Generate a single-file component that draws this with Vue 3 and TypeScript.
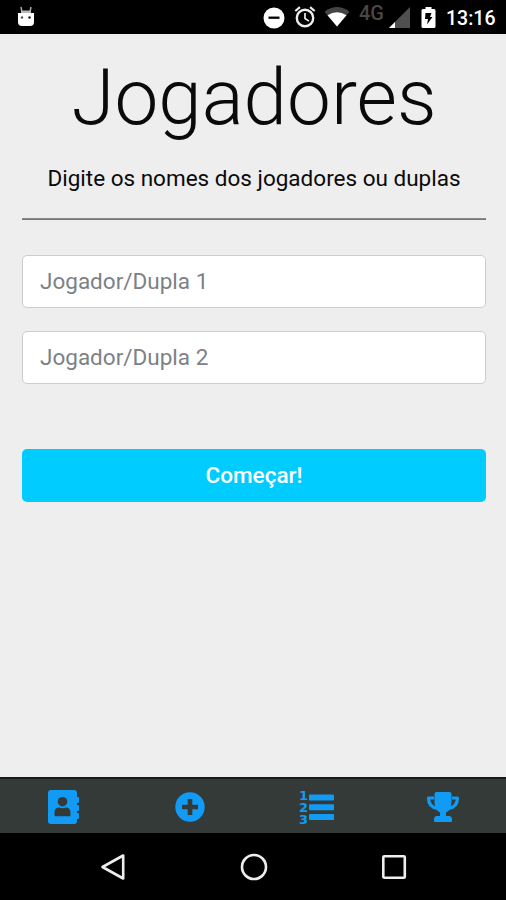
<script setup lang="ts">
import { ref } from 'vue'

interface Player {
  id: number
  name: string
}

const players = ref<Player[]>([
  { id: 1, name: '' },
  { id: 2, name: '' },
])
</script>

<template>
  <div class="screen">
    <header class="status-bar">
      <svg class="robot" width="18" height="22" viewBox="0 0 18 22">
        <path d="M4 1l1 5M14 1l-1 5" stroke="#aaa" stroke-width="1.5" />
        <path d="M4 4.5h10v3H4z" fill="#bbb" />
        <path d="M1 7h16v9q0 4-4 4H5q-4 0-4-4z" fill="#fff" />
        <circle cx="5" cy="11.5" r="1.2" fill="#555" />
        <circle cx="12.5" cy="11.5" r="1.3" fill="#222" />
      </svg>
      <div class="status-icons">
        <svg class="dnd" width="22" height="22" viewBox="0 0 22 22">
          <circle cx="11" cy="11" r="10.5" fill="#fff" />
          <path d="M5.5 10.7h11" stroke="#000" stroke-width="2.3" />
        </svg>
        <svg class="alarm" width="22" height="22" viewBox="0 0 22 22" fill="none" stroke="#eee">
          <circle cx="11" cy="12" r="8.2" stroke-width="2.4" />
          <path d="M1.3 5l4.6-3.8M20.7 5l-4.6-3.8" stroke-width="2.2" />
          <path d="M11 7v5.5l4 2.6" stroke-width="1.7" />
        </svg>
        <svg class="wifi" width="26" height="20" viewBox="0 0 26 20">
          <path d="M.5 4.7Q13-4.500 25.500 4.700L13 19.500z" fill="#444" />
          <path d="M3.500 8.300Q13 2 22.500 8.300L13 19.500z" fill="#fff" />
        </svg>
        <span class="network">4G</span>
        <svg class="signal" width="21" height="21" viewBox="0 0 21 21">
          <path d="M21 0v21H0z" fill="#505050" />
          <path d="M6 15v6H0z" fill="#fff" />
        </svg>
        <svg class="battery" width="15" height="21" viewBox="0 0 15 21">
          <path d="M4.500 0h6v2H13q1.500 0 1.500 1.500v16q0 1.500-1.500 1.500H2Q.5 21 .5 19.500v-16Q.5 2 2 2h2.500z" fill="#fff" />
          <path d="M4.500 6h6L9 10h2.500L6 17.500 7 12H4z" fill="#000" />
        </svg>
        <time class="clock">13:16</time>
      </div>
    </header>

    <main class="content">
      <h1>Jogadores</h1>
      <p>Digite os nomes dos jogadores ou duplas</p>
      <hr />
      <form @submit.prevent>
        <input
          v-for="player in players"
          :key="player.id"
          v-model="player.name"
          type="text"
          :placeholder="`Jogador/Dupla ${player.id}`"
        />
        <button type="submit">Começar!</button>
      </form>
    </main>

    <nav class="tabs">
      <a class="tab">
        <svg width="34" height="36" viewBox="0 0 34 36">
          <path d="M5 1h23q3 0 3 3v4h1q1 0 1 1v4q0 1-1 1h-1v2h1q1 0 1 1v4q0 1-1 1h-1v2h1q1 0 1 1v4q0 1-1 1h-1v2q0 3-3 3H5q-3 0-3-3V4q0-3 3-3z" fill="#129bf4" />
          <circle cx="16.500" cy="12.700" r="4.800" fill="#343a38" />
          <path d="M8.500 26.500v-3q0-5 5-5 3 1.500 6 0 5 0 5 5v3q0 .700-1 .700H9.500q-1 0-1-.700z" fill="#343a38" />
        </svg>
      </a>
      <a class="tab">
        <svg width="32" height="32" viewBox="0 0 32 32">
          <circle cx="16" cy="16" r="14.700" fill="#129bf4" />
          <path d="M16 8v16M8 16h16" stroke="#343a38" stroke-width="4.600" stroke-linejoin="round" />
        </svg>
      </a>
      <a class="tab">
        <svg width="36" height="42" viewBox="0 -3 36 42" fill="#129bf4">
          <text class="numeral" x="1" y="10.700">1</text>
          <text class="numeral" x="1" y="22.900">2</text>
          <text class="numeral" x="1" y="35">3</text>
          <rect x="11" y="5.500" width="25" height="6" rx="1" />
          <rect x="11" y="15.300" width="25" height="6" rx="1" />
          <rect x="11" y="25" width="25" height="6" rx="1" />
        </svg>
      </a>
      <a class="tab">
        <svg width="34" height="32" viewBox="0 0 34 32">
          <path d="M8 7H2.500q0 9 9 10.500M26 7h5.500q0 9-9 10.500" fill="none" stroke="#129bf4" stroke-width="3.200" stroke-linejoin="round" />
          <path d="M8.500 3Q8.500 1 10.500 1h13q2 0 2 2v8q0 8-5.500 10.500v3.500h3q3 0 3 4v1q0 1-1 1H9q-1 0-1-1v-1q0-4 3-4h3v-3.500Q8.500 19 8.500 11z" fill="#129bf4" />
        </svg>
      </a>
    </nav>

    <footer class="system-nav">
      <svg width="28" height="30" viewBox="0 0 28 30" fill="none" stroke="#eee" stroke-width="2.600">
        <path d="M24.200 3.500v23L3.500 15z" stroke-linejoin="round" />
      </svg>
      <svg width="28" height="30" viewBox="0 0 28 30" fill="none" stroke="#eee" stroke-width="2.600">
        <circle cx="14" cy="15" r="12" />
      </svg>
      <svg width="28" height="30" viewBox="0 0 28 30" fill="none" stroke="#eee" stroke-width="2.600">
        <rect x="3.300" y="4.200" width="21.500" height="21.500" rx="1" />
      </svg>
    </footer>
  </div>
</template>

<style>
body {
  margin: 0;
  background: #eee;
}
</style>

<style scoped>
.screen {
  display: flex;
  flex-direction: column;
  height: 900px;
  overflow: hidden;
  background: #eee;
  color: #0a0a0a;
  font-family: Roboto, sans-serif;
}

.screen * {
  box-sizing: border-box;
}

svg {
  display: block;
  flex: none;
}

.status-bar {
  display: flex;
  justify-content: space-between;
  height: 34px;
  padding: 0 11px 0 17px;
  background: #000;
}

.robot {
  margin-top: 6px;
}

.status-icons {
  display: flex;
  align-items: flex-start;
}

.dnd {
  margin-top: 7px;
}

.alarm {
  margin: 6px 0 0 9px;
}

.wifi {
  margin: 7px 0 0 8px;
}

.network {
  width: 26px;
  margin: 3px 0 0 9px;
  color: #484848;
  font-size: 20px;
  line-height: 20px;
  font-weight: 500;
}

.signal {
  margin: 7px 0 0 4px;
}

.battery {
  margin: 7px 0 0 11px;
}

.clock {
  width: 49px;
  margin: 7px 0 0 10px;
  color: #fff;
  font-size: 19.5px;
  line-height: 24px;
  font-weight: 500;
}

.content {
  flex: 1;
  padding: 16px 20px 0 22px;
}

h1 {
  margin: 0;
  font-size: 78.2px;
  line-height: 94px;
  font-weight: 300;
  text-align: center;
}

p {
  margin: 17px 0 0;
  font-size: 22.5px;
  line-height: 34px;
  text-align: center;
}

hr {
  height: 2px;
  margin: 23px 0 35px;
  border: 0;
  background: linear-gradient(#8a8a8a 50%, #777 50%);
}

form {
  display: flex;
  flex-direction: column;
}

input {
  width: 100%;
  height: 53px;
  margin: 0 0 23px;
  padding: 0 17px 2px;
  border: 1px solid #ccc;
  border-radius: 5px;
  background: #fff;
  font: 400 22.5px Roboto, sans-serif;
}

input::placeholder {
  color: #7b8187;
  opacity: 1;
}

button {
  height: 53px;
  margin-top: 42px;
  padding: 0 0 2px;
  border: 0;
  border-radius: 5px;
  background: #0cf;
  color: #fff;
  font: 500 22.5px Roboto, sans-serif;
}

.tabs {
  display: grid;
  grid-template-columns: repeat(4, 1fr);
  height: 56px;
  padding-top: 1px;
  border-top: 2px solid #171a19;
  background: #343a38;
}

.tab {
  display: flex;
  align-items: center;
  justify-content: center;
}

.numeral {
  font: 700 13px "DejaVu Sans", sans-serif;
}

.system-nav {
  display: flex;
  justify-content: space-between;
  height: 67px;
  padding: 19px 98px 0 99px;
  background: #000;
}
</style>
